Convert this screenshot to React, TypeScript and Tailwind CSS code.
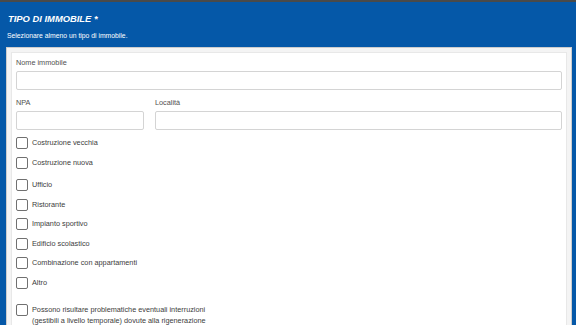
import React from 'react';

const groups: string[][] = [
  ['Costruzione vecchia', 'Costruzione nuova'],
  [
    'Ufficio',
    'Ristorante',
    'Impianto sportivo',
    'Edificio scolastico',
    'Combinazione con appartamenti',
    'Altro',
  ],
];

const Checkbox: React.FC<{ label: React.ReactNode; multi?: boolean }> = ({ label, multi }) => (
  <label className={`flex items-start gap-[4px] ${multi ? '' : 'h-[19.5px]'}`}>
    <span className="w-[12px] h-[12px] shrink-0 rounded-[2px] border border-[#707070] bg-white" />
    <span className={`text-[#3c3c3c] ${multi ? 'leading-[11px] -mt-[0.5px]' : 'leading-[11px]'}`}>{label}</span>
  </label>
);

const Field: React.FC<{ label: string; className?: string }> = ({ label, className }) => (
  <div className={`flex flex-col ${className ?? ''}`}>
    <span className="text-[#505050] leading-[10px]">{label}</span>
    <div className="mt-[3px] h-[19px] rounded-[2px] border border-[#d4d4d4] bg-white" />
  </div>
);

export default function App() {
  return (
    <div
      className="w-[576px] h-[325px] overflow-hidden bg-[#4a4a4a] pt-[2px] text-[7.3px]"
      style={{ fontFamily: '"Liberation Sans", Arial, sans-serif' }}
    >
      <div className="h-full bg-[#0558a8] pl-[6px] pr-[4px]">
        {/* Header */}
        <div className="pl-[2px] pt-[10px] h-[45px]">
          <h1 className="text-white text-[9.4px] font-bold italic leading-[13px]">
            TIPO DI IMMOBILE *
          </h1>
          <p className="mt-[7px] text-white text-[6.8px] leading-[8px] -ml-[1px]">
            Selezionare almeno un tipo di immobile.
          </p>
        </div>

        {/* Card */}
        <div className="h-[300px] border border-[#cdcdcd] bg-[#f4f4f4] p-[4px] pb-0">
          <div className="h-full border border-[#e8e8e8] border-b-0 bg-white px-[4px] pt-[5px]">
            <Field label="Nome immobile" />
            <div className="mt-[8px] flex gap-[11px]">
              <Field label="NPA" className="w-[128px]" />
              <Field label="Località" className="flex-1" />
            </div>

            <div className="mt-[7px] flex flex-col">
              {groups[0].map((g) => (
                <Checkbox key={g} label={g} />
              ))}
              <div className="h-[3px]" />
              {groups[1].map((g) => (
                <Checkbox key={g} label={g} />
              ))}
              <div className="h-[8px]" />
              <Checkbox
                multi
                label={
                  <>
                    Possono risultare problematiche eventuali interruzioni
                    <br />
                    (gestibili a livello temporale) dovute alla rigenerazione
                  </>
                }
              />
            </div>
          </div>
        </div>
      </div>
    </div>
  );
}
